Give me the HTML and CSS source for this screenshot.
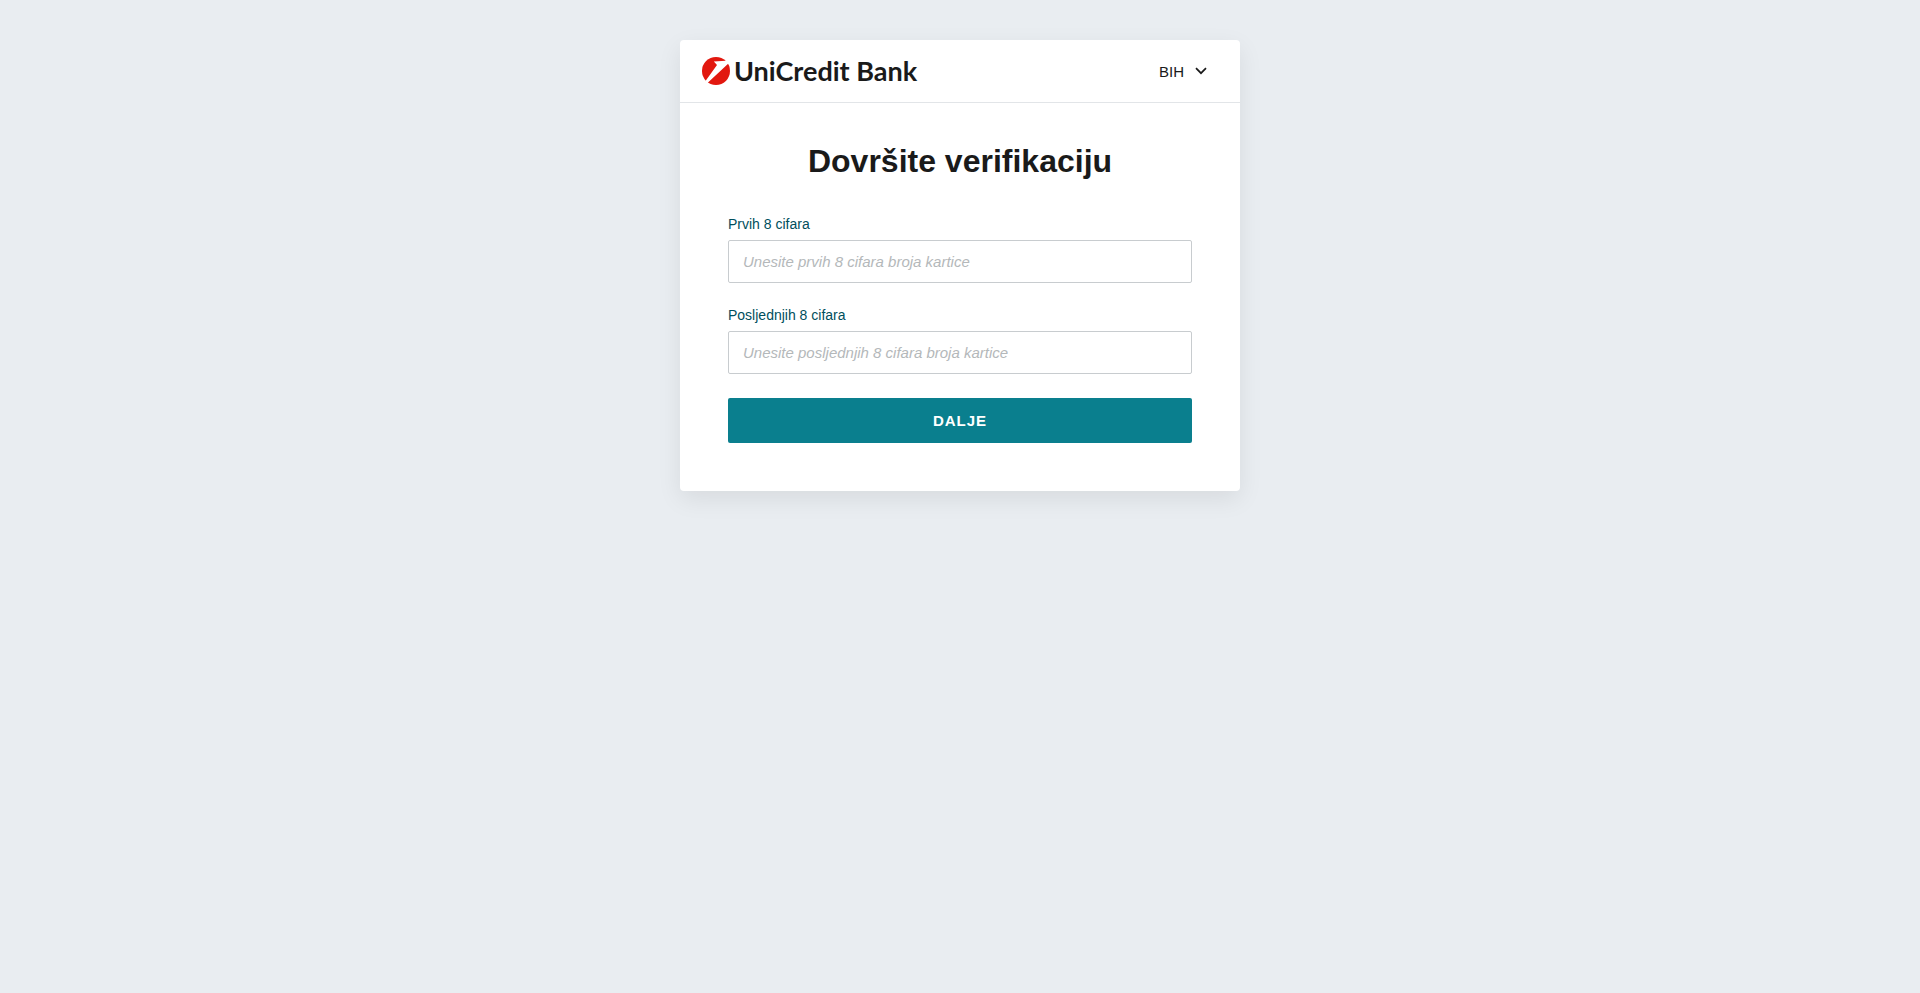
FILE: index.html
```html
<!DOCTYPE html>
<html lang="bs">
<head>
<meta charset="utf-8">
<meta name="viewport" content="width=device-width, initial-scale=1">
<title>Dovršite verifikaciju</title>
<link rel="stylesheet" href="styles.css">
</head>
<body>
<main class="card">
  <header class="header">
    <div class="logo">
      <svg class="emblem" viewBox="0 0 28 28" aria-hidden="true">
        <circle cx="14" cy="14" r="14" fill="#e2180f"/>
        <path d="M11.8 4.4 28 3.6V5L4.4 27 2.4 25.4 15 8Z" fill="#fff"/>
      </svg>
      <span class="wordmark">UniCredit Bank</span>
    </div>
    <div class="language">
      <select class="language-select" aria-label="Jezik">
        <option>BIH</option>
      </select>
      <svg class="chevron" viewBox="0 0 12 8" aria-hidden="true">
        <path d="M1 1.2 6 6.2 11 1.2" fill="none" stroke="#1a1a1a" stroke-width="1.7"/>
      </svg>
    </div>
  </header>
  <form class="form">
    <h1 class="title">Dovršite verifikaciju</h1>
    <div class="field">
      <label class="label" for="first">Prvih 8 cifara</label>
      <input class="input" id="first" type="text" inputmode="numeric" placeholder="Unesite prvih 8 cifara broja kartice">
    </div>
    <div class="field">
      <label class="label" for="last">Posljednjih 8 cifara</label>
      <input class="input" id="last" type="text" inputmode="numeric" placeholder="Unesite posljednjih 8 cifara broja kartice">
    </div>
    <button class="submit" type="button">DALJE</button>
  </form>
</main>
</body>
</html>
```

FILE: styles.css
```css
* {
  box-sizing: border-box;
}

body {
  margin: 0;
  padding: 40px 16px;
  background: #e9edf1;
  color: #1a1a1a;
  font-family: "Liberation Sans", Arial, sans-serif;
}

.card {
  max-width: 560px;
  margin: 0 auto;
  background: #fff;
  border-radius: 4px;
  box-shadow: 0 8px 24px rgba(0, 0, 0, 0.08);
}

.header {
  display: flex;
  align-items: center;
  justify-content: space-between;
  padding: 13px 33px 13px 22px;
  border-bottom: 1px solid #e2e5e8;
}

.logo {
  display: flex;
  align-items: center;
  gap: 4px;
}

.emblem {
  width: 28px;
  height: 28px;
}

.wordmark {
  font-family: Lato, sans-serif;
  font-size: 27px;
  font-weight: 700;
  line-height: 36px;
}

.language {
  display: flex;
  align-items: center;
}

.language-select {
  appearance: none;
  margin: 0 -12px 0 0;
  padding: 2px 22px 0 0;
  border: 0;
  background: transparent;
  color: inherit;
  font: 15px/20px "Liberation Sans", Arial, sans-serif;
}

.chevron {
  width: 12px;
  height: 8px;
  pointer-events: none;
}

.form {
  padding: 40px 48px 48px;
}

.title {
  margin: 0 0 36px;
  font-size: 32px;
  line-height: 37px;
  text-align: center;
}

.field {
  margin-bottom: 24px;
}

.label {
  display: block;
  margin-bottom: 8px;
  color: #004e5c;
  font-size: 14px;
  line-height: 16px;
}

.input {
  display: block;
  width: 100%;
  padding: 12px 14px;
  border: 1px solid #c8cccf;
  border-radius: 2px;
  background: #fff;
  color: inherit;
  font: 15px/17px "Liberation Sans", Arial, sans-serif;
}

.input::placeholder {
  color: #b4b8ba;
  font-style: italic;
}

.submit {
  display: block;
  width: 100%;
  padding: 14px;
  border: 0;
  border-radius: 2px;
  background: #0a7f8e;
  color: #fff;
  font: 700 15px/17px "Liberation Sans", Arial, sans-serif;
  letter-spacing: 1px;
}
```
